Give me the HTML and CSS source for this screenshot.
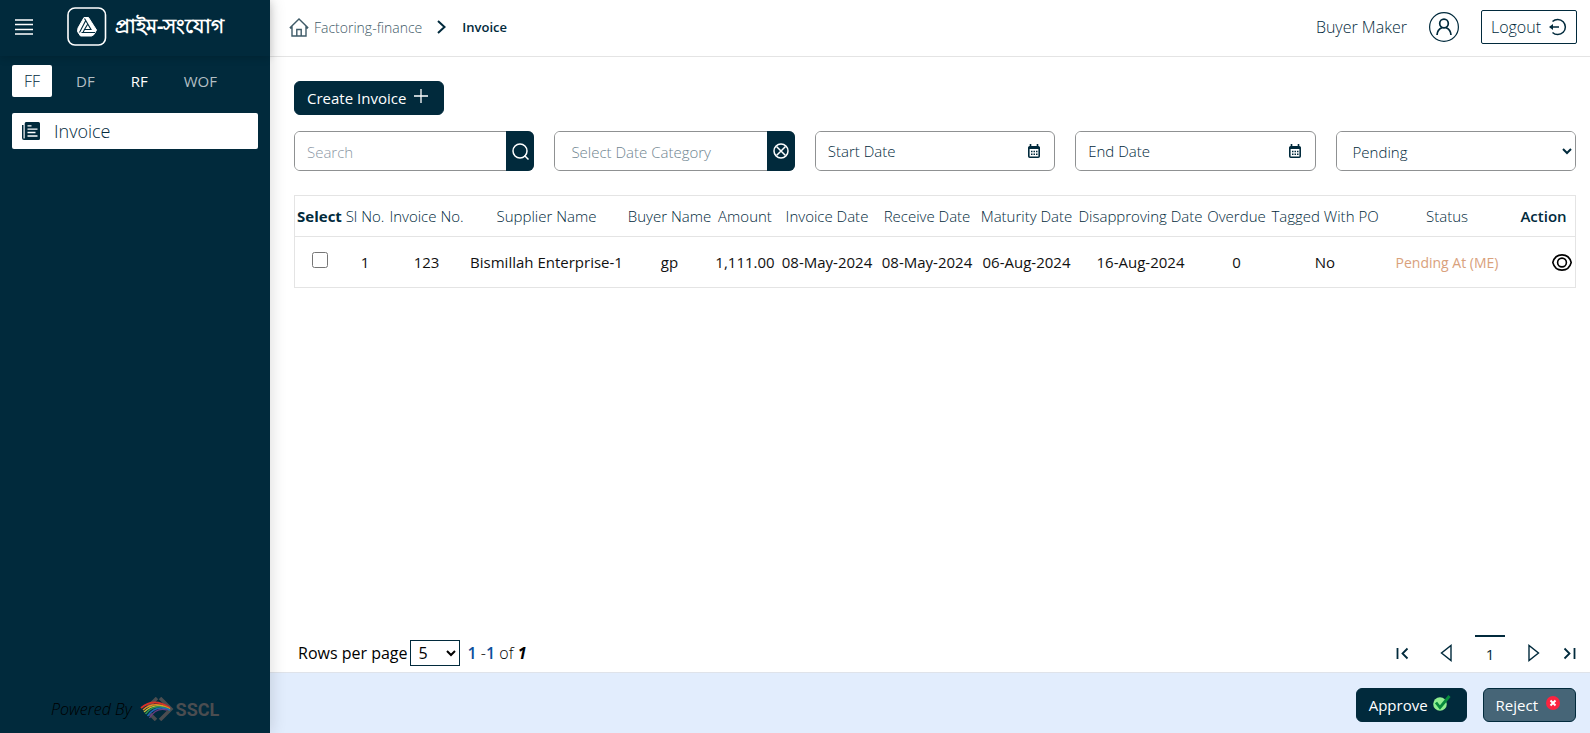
FILE: index.html
```html
<!DOCTYPE html>
<html lang="en">
<head>
<meta charset="utf-8">
<title>Invoice</title>
<link rel="stylesheet" href="styles.css">
</head>
<body>
<div class="app">
  <aside class="sidebar">
    <div class="brand">
      <button class="menu" aria-label="Toggle menu">
        <svg width="18" height="16" viewBox="0 0 18 16" stroke="#fff" stroke-width="1.4"><path d="M0 1h18M0 5.5h18M0 10.5h18M0 15h18"/></svg>
      </button>
      <svg class="brand-mark" width="40" height="40" viewBox="0 0 40 40" fill="none">
        <rect x="1" y="1" width="37.500" height="37" rx="7" stroke="#fff" stroke-width="1.600"/>
        <path d="M17 10.500h4.500L29.500 23 27 27.500 24.500 29H13.500L10.500 24.500 11 21z" fill="#fff" stroke="#fff" stroke-linejoin="round"/>
        <path d="M17.500 11.500L24 22.500H17.500L20.500 17.500M18.500 14L12.500 25.500M14.500 25.500H28M17.500 22.500L16 25.500" stroke="#012a3c" stroke-width="1.100"/>
      </svg>
      <span class="brand-name" lang="bn">প্রাইম-সংযোগ</span>
    </div>
    <nav class="tabs">
      <a class="tab active" href="#ff">FF</a>
      <a class="tab" href="#df">DF</a>
      <a class="tab strong" href="#rf">RF</a>
      <a class="tab" href="#wof">WOF</a>
    </nav>
    <nav class="side-nav">
      <a class="side-link" href="#invoice">
        <svg width="18" height="18" viewBox="0 0 18 18"><path d="M4 0h12.500A1.500 1.500 0 0 1 18 1.500v15a1.500 1.500 0 0 1-1.500 1.500H2a2 2 0 0 1-2-2V3h1.500v13a.6.6 0 0 0 1.200 0V1.500A1.500 1.500 0 0 1 4 0z" fill="#012a3c"/><path d="M5.500 3.800h4M5.500 7.200h10M5.500 10.500h8M5.500 14h10" stroke="#fff" stroke-width="1.300"/></svg>
        <span>Invoice</span>
      </a>
    </nav>
    <div class="powered">
      <em>Powered By</em>
      <svg width="34" height="24" viewBox="0 0 34 24" fill="none">
        <path d="M17 1L8 10M10 17l6 6M20 1l11 11-11 11" stroke="#4b4d50" stroke-width="3.500"/>
        <path d="M1 11Q14 0 30 11" stroke="#d8322a" stroke-width="1.800"/>
        <path d="M3 13Q14 3 30 12" stroke="#e98b21" stroke-width="1.500"/>
        <path d="M4 15Q15 4 30 12.500" stroke="#c8bd39" stroke-width="1.300"/>
        <path d="M5.500 17Q15 5 30 13" stroke="#2c9254" stroke-width="1.500"/>
        <path d="M7.500 19Q16 7 30 13" stroke="#2468b5" stroke-width="1.500"/>
        <path d="M9.500 21Q16 10 27 13" stroke="#6b3c83" stroke-width="1.300"/>
      </svg>
      <strong>SSCL</strong>
    </div>
  </aside>

  <div class="main">
    <header class="topbar">
      <nav class="crumbs">
        <a class="crumb" href="#home">
          <svg width="20" height="19" viewBox="0 0 20 19" fill="none" stroke="#3f5b68" stroke-width="1.400"><path d="M.8 10L10 1l9.200 9M3 8v10h14V8M7.800 18v-6.500h4.400V18M3 10H1M17 10h2"/></svg>
          <span>Factoring-finance</span>
        </a>
        <svg width="10" height="14" viewBox="0 0 10 14" fill="none" stroke="#012a3c" stroke-width="2"><path d="M1 1l6.500 6L1 13"/></svg>
        <span class="crumb-current">Invoice</span>
      </nav>
      <div class="user">
        <span>Buyer Maker</span>
        <svg width="30" height="30" viewBox="0 0 30 30" fill="none" stroke="#012a3c"><circle cx="15" cy="15" r="14.400" stroke-width="1.200"/><circle cx="15" cy="11.500" r="4.300" stroke-width="1.700"/><path d="M8 23c.3-4.500 3-6.500 4.800-7.300M22 23c-.3-4.500-3-6.500-4.800-7.300" stroke-width="1.700"/></svg>
        <button class="logout">Logout
          <svg width="18" height="18" viewBox="0 0 18 18" fill="none" stroke="#012a3c" stroke-width="1.500"><path d="M3.500 3.500a7.600 7.600 0 1 1 0 11M1 9H10"/><path d="M0 9l4-3v6z" fill="#012a3c" stroke="none"/></svg>
        </button>
      </div>
    </header>

    <main class="content">
      <button class="btn create">Create Invoice
        <svg class="plus" width="14" height="14" viewBox="0 0 14 14" stroke="#fff" stroke-width="1.300"><path d="M7 0v14M0 7h14"/></svg>
      </button>

      <div class="filters">
        <div class="field">
          <input class="control" type="text" placeholder="Search" aria-label="Search">
          <button class="addon" aria-label="Search">
            <svg width="17" height="17" viewBox="0 0 17 17" fill="none" stroke="#fff" stroke-width="1.500"><circle cx="8" cy="8" r="7"/><path d="M12.500 12.500l4 4"/></svg>
          </button>
        </div>
        <div class="field">
          <select class="control category" aria-label="Date category"><option>Select Date Category</option></select>
          <button class="addon" aria-label="Clear date category">
            <svg width="16" height="16" viewBox="0 0 16 16" fill="none" stroke="#fff" stroke-width="1.500"><circle cx="8" cy="8" r="7"/><path d="M3.500 3.500l9 9M12.500 3.500l-9 9"/></svg>
          </button>
        </div>
        <div class="field">
          <input class="control date" type="text" placeholder="Start Date" aria-label="Start Date">
          <button class="picker" aria-label="Pick start date"><svg width="14" height="15" viewBox="0 0 14 15"><path d="M3.500 0v3M10.500 0v3" stroke="#012a3c" stroke-width="1.600"/><rect x="1.800" y="2.800" width="10.400" height="10.400" rx="1" fill="none" stroke="#012a3c" stroke-width="1.600"/><path d="M1.500 4h11" stroke="#012a3c" stroke-width="2"/><path d="M4 7.500h6.500M4 10.300h6.500" stroke="#012a3c" stroke-width="1.500" stroke-dasharray="1.500 1"/></svg></button>
        </div>
        <div class="field">
          <input class="control date" type="text" placeholder="End Date" aria-label="End Date">
          <button class="picker" aria-label="Pick end date"><svg width="14" height="15" viewBox="0 0 14 15"><path d="M3.500 0v3M10.500 0v3" stroke="#012a3c" stroke-width="1.600"/><rect x="1.800" y="2.800" width="10.400" height="10.400" rx="1" fill="none" stroke="#012a3c" stroke-width="1.600"/><path d="M1.500 4h11" stroke="#012a3c" stroke-width="2"/><path d="M4 7.500h6.500M4 10.300h6.500" stroke="#012a3c" stroke-width="1.500" stroke-dasharray="1.500 1"/></svg></button>
        </div>
        <div class="field">
          <select class="control status" aria-label="Status"><option>Pending</option></select>
        </div>
      </div>

      <table class="grid">
        <colgroup>
          <col class="w49"><col class="w42"><col class="w81"><col class="w159"><col class="w87"><col class="w64"><col class="w100"><col class="w100"><col class="w99"><col class="w129"><col class="w63"><col class="w114"><col class="w130"><col class="w63">
        </colgroup>
        <thead>
          <tr><th class="select-head">Select</th><th>Sl No.</th><th>Invoice No.</th><th>Supplier Name</th><th>Buyer Name</th><th>Amount</th><th>Invoice Date</th><th>Receive Date</th><th>Maturity Date</th><th>Disapproving Date</th><th>Overdue</th><th>Tagged With PO</th><th>Status</th><th class="action-head">Action</th></tr>
        </thead>
        <tbody>
          <tr>
            <td><input class="check" type="checkbox" aria-label="Select invoice 123"></td>
            <td>1</td><td>123</td><td>Bismillah Enterprise-1</td><td>gp</td><td>1,111.00</td><td>08-May-2024</td><td>08-May-2024</td><td>06-Aug-2024</td><td>16-Aug-2024</td><td>0</td><td>No</td>
            <td class="state">Pending At (ME)</td>
            <td class="action"><button class="view" aria-label="View invoice"><svg width="20" height="17" viewBox="0 0 20 17" fill="none" stroke="#000" stroke-width="1.600"><path d="M.8 8.500C3.500-1.700 16.500-1.700 19.200 8.500 16.500 18.700 3.500 18.700.8 8.500z"/><circle cx="10" cy="8.500" r="4.400"/></svg></button></td>
          </tr>
        </tbody>
      </table>

      <div class="pager">
        <div class="rows">
          <label for="rows">Rows per page</label>
          <select id="rows" class="rows-select"><option>5</option></select>
          <span class="range"><b>1</b> -<b>1</b> of <strong>1</strong></span>
        </div>
        <nav class="pages">
          <button class="page-btn" aria-label="First page"><svg width="13" height="13" viewBox="0 0 13 13" fill="none" stroke="#012a3c" stroke-width="1.800"><path d="M1.500 1v11M11.500 1.500l-5 5 5 5"/></svg></button>
          <button class="page-btn" aria-label="Previous page"><svg width="12" height="18" viewBox="0 0 12 18" fill="none" stroke="#012a3c" stroke-width="1.400"><path d="M11 1.500v15L1.500 9z"/></svg></button>
          <button class="page-btn current" aria-current="page">1</button>
          <button class="page-btn" aria-label="Next page"><svg width="12" height="18" viewBox="0 0 12 18" fill="none" stroke="#012a3c" stroke-width="1.400"><path d="M1 1.500v15L10.500 9z"/></svg></button>
          <button class="page-btn" aria-label="Last page"><svg width="13" height="13" viewBox="0 0 13 13" fill="none" stroke="#012a3c" stroke-width="1.800"><path d="M11.500 1v11M1.500 1.500l5 5-5 5"/></svg></button>
        </nav>
      </div>
    </main>

    <footer class="actions">
      <button class="btn approve">Approve
        <svg class="mark" width="18" height="16" viewBox="0 0 18 16" fill="none"><circle cx="7" cy="9" r="6.800" fill="#8fee90"/><path d="M3 7.500l4 5L16.500 1" stroke="#078a3c" stroke-width="2.800"/></svg>
      </button>
      <button class="btn reject">Reject
        <svg class="mark" width="14" height="14" viewBox="0 0 14 14" fill="none"><circle cx="7" cy="7" r="7" fill="#fb2440"/><path d="M4.500 4.500l5 5M9.500 4.500l-5 5" stroke="#fff" stroke-width="2"/></svg>
      </button>
    </footer>
  </div>
</div>
</body>
</html>
```
FILE: styles.css
```css
* { box-sizing: border-box; }

body {
  margin: 0;
  font-family: "Open Sans", "Noto Sans", sans-serif;
  font-size: 15px;
  font-weight: 300;
  color: #012a3c;
  background: #fff;
}

button, input, select { font: inherit; color: inherit; margin: 0; }
button { padding: 0; border: 0; background: none; cursor: pointer; }
a { color: inherit; text-decoration: none; }
svg { display: block; flex: none; }

.app { display: flex; min-height: 100vh; }

.sidebar {
  display: flex;
  flex-direction: column;
  flex: 0 0 270px;
  background: #012a3c;
  color: #fff;
  box-shadow: 0 0 16px rgba(0, 0, 0, .16);
  z-index: 1;
}

.brand {
  display: flex;
  align-items: center;
  height: 56px;
  padding: 0 15px 2px;
  box-shadow: 0 2px 8px rgba(0, 0, 0, .16);
}
.brand-mark { margin: 0 8px 0 34px; }
.brand-name { font-size: 20px; font-weight: 700; white-space: nowrap; }

.tabs { display: flex; gap: 12px; padding: 9px 12px 16px; }
.tab {
  padding: 0 12px;
  border-radius: 2px;
  line-height: 32px;
  color: #b3bfc4;
  font-weight: 400;
}
.tab.active { background: #fff; color: #012a3c; font-size: 16px; font-weight: 300; }
.tab.strong { color: #fff; }

.side-nav { padding: 0 12px; }
.side-link {
  display: flex;
  align-items: center;
  gap: 14px;
  height: 36px;
  padding: 0 10px;
  border-radius: 2px;
  background: #fff;
  color: #012a3c;
  font-size: 18px;
}

.powered {
  display: flex;
  align-items: center;
  gap: 2px;
  margin-top: auto;
  padding: 0 0 12px 51px;
  color: #000;
}
.powered em { margin-right: 6px; font-size: 16px; line-height: 24px; }
.powered strong {
  font-family: Roboto, sans-serif;
  font-size: 18px;
  font-weight: 700;
  color: #4b4d50;
}

.main { display: flex; flex-direction: column; flex: 1; min-width: 0; }

.topbar {
  display: flex;
  align-items: center;
  justify-content: space-between;
  height: 57px;
  padding: 0 13px 2px 19px;
  border-bottom: 1px solid #e4e4e4;
}
.crumbs, .crumb, .user, .logout { display: flex; align-items: center; }
.crumbs { gap: 15px; font-size: 14px; }
.crumb { gap: 5px; color: #3f5b68; }
.crumb-current { font-weight: 600; font-size: 13px; }
.user { gap: 22px; font-size: 16px; }
.logout {
  gap: 8px;
  height: 34px;
  padding: 0 9px;
  border: 1px solid #012a3c;
  border-radius: 2px;
}

.content { display: flex; flex-direction: column; flex: 1; padding: 24px 14px 1px 24px; }

.btn {
  display: flex;
  align-items: center;
  gap: 8px;
  height: 34px;
  padding: 0 15px 0 12px;
  border: 1px solid #012a3c;
  border-radius: 6px;
  background: #012a3c;
  color: #fff;
  font-weight: 400;
}
.create { align-self: flex-start; }
.plus, .mark { margin-bottom: 4px; }

.filters { display: grid; grid-template-columns: repeat(5, minmax(0, 1fr)); gap: 20px; margin: 16px 0 24px; }
.field {
  display: flex;
  height: 40px;
  border: 1px solid #8f9192;
  border-radius: 6px;
}
.control { flex: 1; min-width: 0; padding: 2px 12px 0; border: 0; border-radius: 5px; background: #fff; outline: 0; }
.control::placeholder { color: #8b97a5; opacity: 1; }
.date { padding-top: 0; }
.date::placeholder { color: #012a3c; }
.category { padding-left: 16px; appearance: none; color: #6f8590; }
.status { padding: 2px 0 0 12px; }
.addon { display: grid; place-items: center; width: 28px; margin: -1px -1px -1px 0; border-radius: 0 6px 6px 0; background: #012a3c; }
.picker { padding: 0 13px; }

.grid {
  width: 100%;
  table-layout: fixed;
  border-collapse: separate;
  border-spacing: 0;
  border: 1px solid #e4e4e4;
  text-align: center;
  white-space: nowrap;
}
.grid th, .grid td { padding: 0; }
.grid th { height: 41px; font-weight: 300; border-bottom: 1px solid #e4e4e4; }
.grid .select-head { font-weight: 700; }
.grid .action-head { font-weight: 600; }
.grid td { height: 50px; color: #111; font-weight: 400; }
.grid .state { color: #d9a17c; font-size: 14px; }
.check { display: block; width: 16px; height: 16px; margin: 0 auto 4px; }
.action .view { display: block; margin: 0 3px 0 auto; }

.w42 { width: 42px; }
.w49 { width: 49px; }
.w63 { width: 63px; }
.w64 { width: 64px; }
.w81 { width: 81px; }
.w87 { width: 87px; }
.w99 { width: 99px; }
.w100 { width: 100px; }
.w114 { width: 114px; }
.w129 { width: 129px; }
.w130 { width: 130px; }
.w159 { width: 159px; }

.pager { display: flex; justify-content: space-between; align-items: center; margin-top: auto; padding-left: 4px; }
.rows { display: flex; align-items: center; gap: 2px; color: #000; font-size: 16px; }
.rows label { font-weight: 400; }
.rows-select { width: 50px; height: 26px; padding-left: 4px; border: 1px solid #012a3c; background: #fff; font-weight: 400; }
.range { margin-left: 6px; }
.range b { color: #0b4f9c; font-weight: 600; }
.range strong { font-style: italic; font-weight: 700; }
.pages { display: flex; align-items: center; gap: 23px; }
.page-btn { display: grid; place-items: center; min-width: 12px; height: 36px; font-weight: 400; }
.page-btn:first-child { margin-right: 8px; }
.page-btn.current { width: 30px; border-top: 2px solid #012a3c; }

.actions {
  display: flex;
  align-items: center;
  justify-content: flex-end;
  gap: 16px;
  height: 61px;
  padding: 4px 14px 0;
  border-top: 1px solid #dfe3ea;
  background: #e2edfd;
}
.approve { gap: 5px; }
.reject { background: #466577; }
```
